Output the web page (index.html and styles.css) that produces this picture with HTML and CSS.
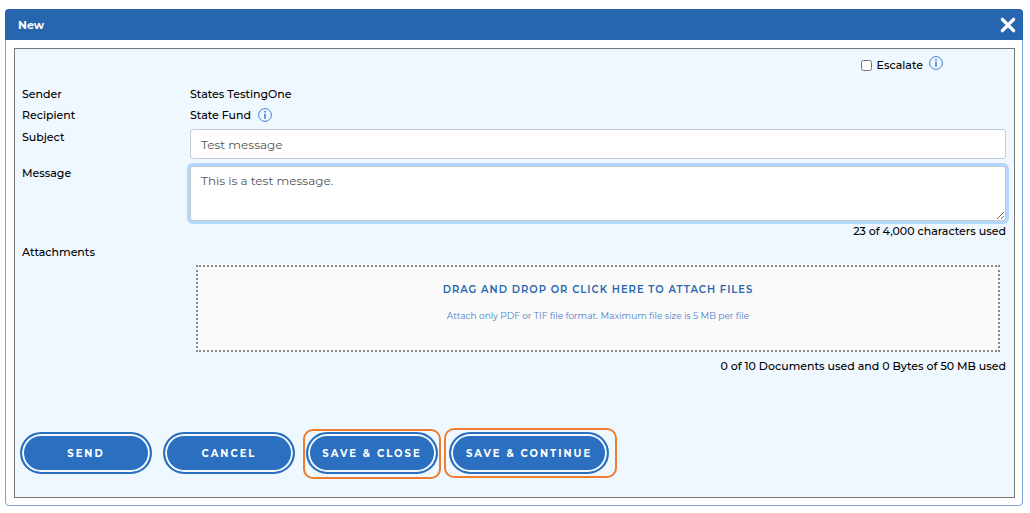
FILE: index.html
```html
<!DOCTYPE html>
<html lang="en">
<head>
<meta charset="utf-8">
<meta name="viewport" content="width=device-width, initial-scale=1">
<title>New message</title>
<link rel="stylesheet" href="styles.css">
</head>
<body>
<section class="dialog" aria-labelledby="dialog-title">
  <header class="dialog-header">
    <h1 class="dialog-title" id="dialog-title">New</h1>
    <button class="close" type="button" aria-label="Close">
      <svg viewBox="0 0 16 16" width="16" height="16" aria-hidden="true"><path d="M3 3 13 13M13 3 3 13"/></svg>
    </button>
  </header>
  <form class="panel">
    <div class="escalate">
      <input class="check" type="checkbox" id="escalate">
      <label for="escalate">Escalate</label>
      <svg class="info info-raised" viewBox="0 0 14 14" aria-hidden="true"><circle cx="7" cy="7" r="6.4"/><path class="dot" d="M6.2 3H7.8V4.6H6.2ZM6.2 5.8H7.8V10.8H6.2Z"/></svg>
    </div>
    <div class="row">
      <span>Sender</span>
      <span>States TestingOne</span>
    </div>
    <div class="row">
      <span>Recipient</span>
      <span class="with-info">State Fund
        <svg class="info" viewBox="0 0 14 14" aria-hidden="true"><circle cx="7" cy="7" r="6.4"/><path class="dot" d="M6.2 3H7.8V4.6H6.2ZM6.2 5.8H7.8V10.8H6.2Z"/></svg>
      </span>
    </div>
    <div class="row row-subject">
      <label for="subject">Subject</label>
      <input class="field" id="subject" type="text" value="Test message">
    </div>
    <div class="row row-message">
      <label for="message">Message</label>
      <div>
        <textarea class="field field-area" id="message">This is a test message.</textarea>
        <p class="count">23 of 4,000 characters used</p>
      </div>
    </div>
    <div class="row">
      <span>Attachments</span>
      <div>
        <button class="dropzone" type="button">
          <span class="drop-title">Drag and drop or click here to attach files</span>
          <span class="drop-note">Attach only PDF or TIF file format. Maximum file size is 5 MB per file</span>
        </button>
        <p class="count">0 of 10 Documents used and 0 Bytes of 50 MB used</p>
      </div>
    </div>
    <div class="actions">
      <button class="pill" type="button">Send</button>
      <button class="pill" type="button">Cancel</button>
      <span class="marked marked-close"><button class="pill" type="button">Save &amp; Close</button></span>
      <span class="marked marked-continue"><button class="pill pill-wide" type="button">Save &amp; Continue</button></span>
    </div>
  </form>
</section>
</body>
</html>
```
FILE: styles.css
```css
* { box-sizing: border-box; }

body {
  margin: 9px 7px 7px 5px;
  background: #fff;
  color: #000;
  font: 500 11px/20px Montserrat, Inter, "Open Sans", sans-serif;
}

button, input, textarea { font: inherit; }

.dialog {
  border: 1px solid #7fa5d6;
  border-radius: 4px;
}

.dialog-header {
  display: flex;
  align-items: center;
  justify-content: space-between;
  height: 31px;
  margin: -1px -1px 0;
  padding: 0 6px 0 13px;
  border-radius: 4px 4px 0 0;
  background: #2765ae;
  color: #fff;
}

.dialog-title { margin: 0; font-size: 11px; font-weight: 700; }

.close { display: flex; padding: 0; border: 0; background: none; }
.close svg { width: 18px; height: 18px; fill: none; stroke: #fff; stroke-width: 3; stroke-linecap: round; }

.panel {
  margin: 8px 7px 7px 8px;
  padding: 6px 8px 23px 7px;
  border: 1px solid #777;
  background: #eff7ff;
}

.escalate {
  display: flex;
  align-items: center;
  justify-content: flex-end;
  gap: 5px;
  height: 20px;
  margin: 0 63px 9px 0;
}
.check { width: 11px; height: 11px; margin: 0; }

.info { width: 14px; height: 14px; fill: none; stroke: #3f82cd; stroke-width: 1; }
.info .dot { fill: #3f82cd; stroke: none; }
.info-raised { align-self: flex-start; margin: 1px 0 0 1px; }
.with-info { display: flex; align-items: center; gap: 7px; }

.row {
  display: grid;
  grid-template-columns: 168px minmax(0, 1fr);
  margin-bottom: 1px;
}
.row-subject { padding-top: 1px; }
.row-message { margin-top: 4px; }

.field {
  display: block;
  width: 100%;
  height: 30px;
  margin-top: 2px;
  padding: 0 10px;
  border: 1px solid #c4cad2;
  border-radius: 3px;
  outline: 0;
  background: #fff;
  color: #555;
  font-size: 12px;
  font-weight: 400;
}
.field-area {
  height: 55px;
  margin-top: 3px;
  padding-top: 4px;
  box-shadow: 0 0 0 3px #b3d7ff;
  resize: vertical;
}

.count { margin: 0; text-align: right; }

.dropzone {
  display: flex;
  flex-direction: column;
  align-items: center;
  justify-content: flex-start;
  gap: 6px;
  width: calc(100% - 12px);
  height: 87px;
  margin: 23px 6px 4px;
  padding: 13px 6px;
  border: 2px dotted #888;
  background: #fafafa;
  color: #2765ae;
}
.drop-title { font-size: 10px; font-weight: 600; letter-spacing: 1px; text-transform: uppercase; }
.drop-note { color: #4a80c8; font-size: 9px; font-weight: 400; }

.actions {
  display: flex;
  flex-wrap: wrap;
  gap: 11px;
  margin: 56px 0 0 -2px;
}
.pill {
  min-width: 132px;
  height: 42px;
  padding: 1px 14px 0;
  border: 2px solid #2a6fc0;
  border-radius: 21px;
  background: #2a6fc0;
  box-shadow: inset 0 0 0 2px #f4f9ff;
  color: #fff;
  font-size: 10px;
  font-weight: 700;
  letter-spacing: 2px;
  text-transform: uppercase;
  white-space: nowrap;
}
.pill-wide { min-width: 160px; }

/* Outlines drawn around the highlighted actions */
.marked { position: relative; }
.marked::after {
  content: "";
  position: absolute;
  border: 2px solid #ee7d31;
  border-radius: 10px;
  pointer-events: none;
}
.marked-close::after { inset: -3px -3px -5px; }
.marked-continue::after { inset: -4px -8px -4px -5px; }
```
